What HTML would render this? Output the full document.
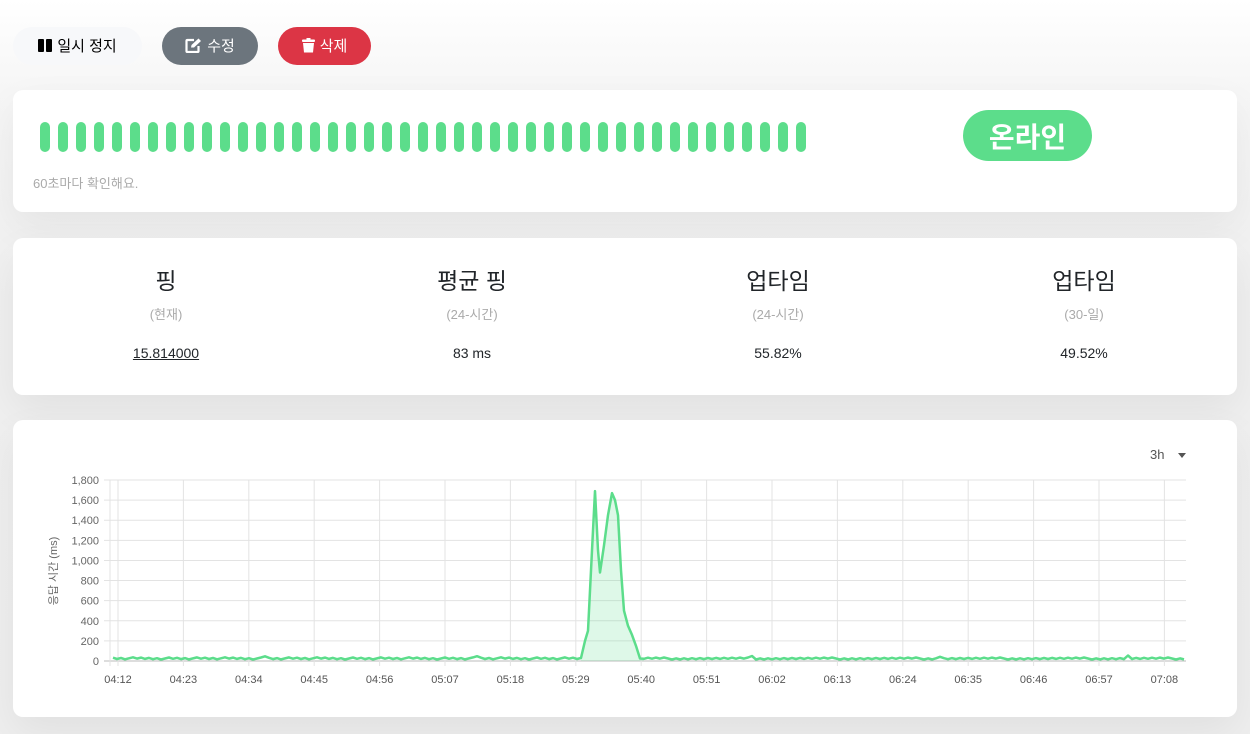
<!DOCTYPE html>
<html><head><meta charset="utf-8"><style>
*{box-sizing:border-box;margin:0;padding:0}
body{width:1250px;height:734px;overflow:hidden;background:linear-gradient(#fff 0,#f6f6f6 90px,#efefef 300px,#eeeeee 734px);font-family:"Liberation Sans","Noto Sans CJK KR",sans-serif;color:#212529;position:relative}
.btn{position:absolute;top:27px;height:38px;border-radius:19px;font-size:15px;display:flex;align-items:center;justify-content:center;gap:5px;padding-bottom:1px}
.card{position:absolute;left:13px;width:1224px;background:#fff;border-radius:10px;box-shadow:0 15px 40px rgba(0,0,0,.06)}
.beat{position:absolute;top:122px;width:10px;height:30px;border-radius:5px;background:#5cdd8b}
.stat{position:absolute;width:306px;text-align:center}
.stat h4{font-size:23px;font-weight:400;margin-top:26px;line-height:34px}
.stat .s{font-size:13px;color:#aaa;margin-top:7px;line-height:20px}
.stat .v{font-size:14px;margin-top:19px;line-height:18px}
</style></head><body>
<div class="btn" style="left:13px;width:129px;background:#f7f8fa;color:#000"><span style="display:inline-flex;gap:2px"><i style="width:6px;height:13px;background:#000;border-radius:1px;display:block"></i><i style="width:6px;height:13px;background:#000;border-radius:1px;display:block"></i></span>일시 정지</div>
<div class="btn" style="left:162px;width:96px;background:#6c757d;color:#fff"><svg width="17" height="15" viewBox="0 0 17 15"><path d="M9 2H2.5Q1.5 2 1.5 3V13Q1.5 14 2.5 14H12.5Q13.5 14 13.5 13V8" fill="none" stroke="#fff" stroke-width="2.2"/><path d="M6 9.5L6.5 7 13.5 0.5 16 3 9 9.5Z" fill="#fff"/></svg>수정</div>
<div class="btn" style="left:278px;width:93px;background:#dc3545;color:#fff"><svg width="13" height="15" viewBox="0 0 13 15"><rect x="0" y="1.5" width="13" height="2.5" rx="1" fill="#fff"/><rect x="4.5" y="0" width="4" height="2" fill="#fff"/><path d="M1 5H12L11 14.5H2Z" fill="#fff"/></svg>삭제</div>

<div class="card" style="top:90px;height:122px"></div>
<div id="beats"></div>
<div style="position:absolute;left:33px;top:173px;font-size:13px;color:#aaa">60초마다 확인해요.</div>
<div style="position:absolute;left:963px;top:110px;width:129px;height:51px;border-radius:26px;background:#5cdd8b;color:#fff;font-weight:bold;font-size:28px;display:flex;align-items:center;justify-content:center">온라인</div>

<div class="card" style="top:238px;height:157px"></div>
<div class="stat" style="left:13px;top:238px"><h4>핑</h4><div class="s">(현재)</div><div class="v"><u>15.814000</u></div></div>
<div class="stat" style="left:319px;top:238px"><h4>평균 핑</h4><div class="s">(24-시간)</div><div class="v">83 ms</div></div>
<div class="stat" style="left:625px;top:238px"><h4>업타임</h4><div class="s">(24-시간)</div><div class="v">55.82%</div></div>
<div class="stat" style="left:931px;top:238px"><h4>업타임</h4><div class="s">(30-일)</div><div class="v">49.52%</div></div>

<div class="card" style="top:420px;height:297px"></div>
<div style="position:absolute;left:1150px;top:447px;font-size:13px;color:#555">3h</div>
<div style="position:absolute;left:1178px;top:453px;border:4px solid transparent;border-top:5px solid #555"></div>
<svg id="ch" style="position:absolute;left:0;top:0" width="1250" height="734"></svg>
<script>
var b='';for(var i=0;i<43;i++)b+='<div class="beat" style="left:'+(40+i*18)+'px"></div>';document.getElementById('beats').innerHTML=b;
var s='',L=110,R=1186,T=480,B=661;
for(var k=0;k<=9;k++){var y=B-k*(B-T)/9;s+='<line x1="104" x2="'+R+'" y1="'+y+'" y2="'+y+'" stroke="'+(k==0?'#bbb':'#e3e3e3')+'"/>';s+='<text x="99" y="'+(y+4)+'" text-anchor="end" font-size="11" fill="#666">'+(k*200).toLocaleString('en-US')+'</text>';}
var labs=['04:12','04:23','04:34','04:45','04:56','05:07','05:18','05:29','05:40','05:51','06:02','06:13','06:24','06:35','06:46','06:57','07:08'];
s+='<line x1="'+L+'" x2="'+L+'" y1="'+T+'" y2="'+(B+5)+'" stroke="#e3e3e3"/>';
for(var j=0;j<labs.length;j++){var x=118+j*65.4;s+='<line x1="'+x+'" x2="'+x+'" y1="'+T+'" y2="'+(B+5)+'" stroke="#e3e3e3"/><text x="'+x+'" y="683" text-anchor="middle" font-size="11" fill="#555">'+labs[j]+'</text>';}
s+='<text transform="translate(57,571) rotate(-90)" text-anchor="middle" font-size="11" fill="#666">응답 시간 (ms)</text>';
function Y(v){return B-v*(B-T)/1800}
var pts=[];for(var x=113;x<=581;x+=4){var v=15+((x*37)%23)+(x%53==0?25:0);pts.push([x,Y(v)]);}
[[585,200],[588,300],[592,1100],[595,1690],[598,1100],[600,880],[604,1150],[608,1450],[612,1670],[615,1600],[618,1450],[621,900],[624,500],[628,350],[632,260],[636,150],[640,25]].forEach(function(p){pts.push([p[0],Y(p[1])])});
for(var x=644;x<=1184;x+=4){var v=15+((x*29)%21)+(x%47==0?25:0);pts.push([x,Y(v)]);}
var d='M'+pts.map(function(p){return p[0]+' '+p[1].toFixed(1)}).join('L');
s+='<path d="M581 '+B+'L'+pts.filter(function(p){return p[0]>=581&&p[0]<=644}).map(function(p){return p[0]+' '+p[1].toFixed(1)}).join('L')+'L644 '+B+'Z" fill="rgba(92,221,139,.2)"/>';
s+='<path d="'+d+'" fill="none" stroke="#5cdd8b" stroke-width="2.5" stroke-linejoin="round"/>';
document.getElementById('ch').innerHTML=s;
</script>
</body></html>
